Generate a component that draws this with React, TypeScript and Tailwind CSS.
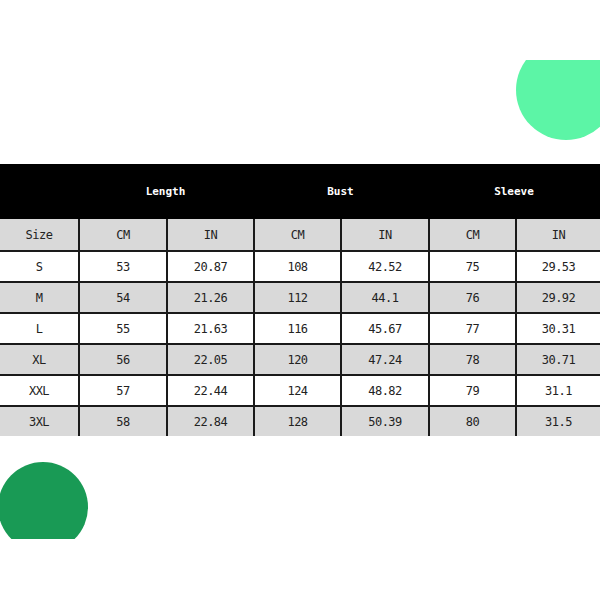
import React from 'react';

const COLS = 'grid grid-cols-[78px_88px_87px_87px_88px_87px_85px]';

const rows = [
  ['S', '53', '20.87', '108', '42.52', '75', '29.53'],
  ['M', '54', '21.26', '112', '44.1', '76', '29.92'],
  ['L', '55', '21.63', '116', '45.67', '77', '30.31'],
  ['XL', '56', '22.05', '120', '47.24', '78', '30.71'],
  ['XXL', '57', '22.44', '124', '48.82', '79', '31.1'],
  ['3XL', '58', '22.84', '128', '50.39', '80', '31.5'],
];

const SizeChart: React.FC = () => {
  return (
    <div className="relative w-[600px] h-[600px] overflow-hidden bg-white font-['DejaVu_Sans_Mono',monospace]">
      {/* decorative circles */}
      <div className="absolute left-[516px] top-[60px] w-[84px] h-[82px] overflow-hidden">
        <div className="absolute left-0 -top-[20px] w-[100px] h-[100px] rounded-full bg-[#5cf5a6]" />
      </div>
      <div className="absolute left-0 top-[462px] w-[90px] h-[77px] overflow-hidden">
        <div className="absolute -left-[2px] top-0 w-[90px] h-[90px] rounded-full bg-[#199a55]" />
      </div>

      <div className="relative mt-[164px]">
        {/* header */}
        <div className="grid grid-cols-[78px_175px_175px_172px] h-[55px] bg-black text-white text-[11px] font-bold">
          <div />
          <div className="flex items-center justify-center pt-[2px]">Length</div>
          <div className="flex items-center justify-center pt-[2px]">Bust</div>
          <div className="flex items-center justify-center pt-[2px]">Sleeve</div>
        </div>

        {/* sub header */}
        <div className={`${COLS} h-[31px] bg-[#d9d9d9] text-[12px] text-[#222] tracking-[-0.5px]`}>
          {['Size', 'CM', 'IN', 'CM', 'IN', 'CM', 'IN'].map((t, i) => (
            <div
              key={i}
              className={`flex items-center justify-center ${i > 0 ? 'border-l-2 border-[#1a1a1a]' : ''}`}
            >
              {t}
            </div>
          ))}
        </div>

        {rows.map((r, ri) => (
          <div
            key={ri}
            className={`${COLS} h-[31px] border-t-2 border-[#1a1a1a] text-[12px] text-[#222] tracking-[-0.5px] ${
              ri % 2 === 1 ? 'bg-[#d9d9d9]' : 'bg-white'
            }`}
          >
            {r.map((t, i) => (
              <div
                key={i}
                className={`flex items-center justify-center ${i > 0 ? 'border-l-2 border-[#1a1a1a]' : ''}`}
              >
                {t}
              </div>
            ))}
          </div>
        ))}
      </div>
    </div>
  );
};

export default function App() {
  return <SizeChart />;
}
